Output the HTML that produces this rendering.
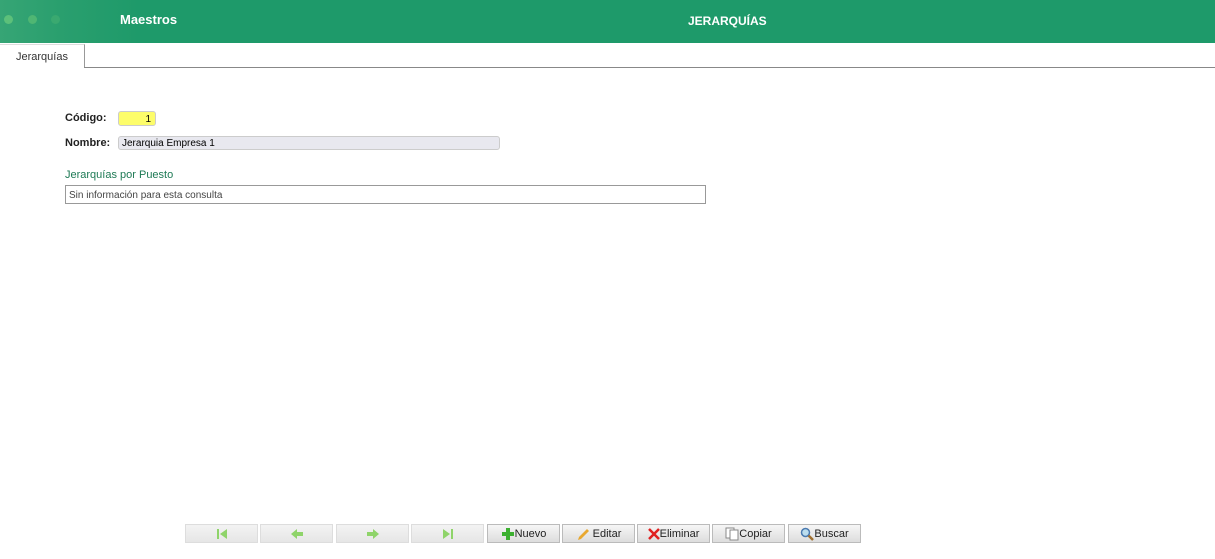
<!DOCTYPE html>
<html><head><meta charset="utf-8"><style>
body{margin:0;width:1215px;height:559px;background:#fff;font-family:"Liberation Sans",sans-serif;position:relative;overflow:hidden}
.hdr{position:absolute;left:0;top:0;width:1215px;height:43px;background:linear-gradient(90deg,#36a575 0px,#2a9f6e 60px,#1e9a6a 140px,#1e9a6a 100%)}
.dot{position:absolute;top:15px;width:9px;height:9px;border-radius:50%}
.t{position:absolute;color:#fff;font-weight:bold;font-size:13px}
.tab{position:absolute;left:0;top:44px;width:84px;height:23px;border-right:1px solid #999;border-top:1px solid #ddd;background:#fff;font-size:11px;color:#333;text-align:center;line-height:24px}
.line{position:absolute;left:84px;top:67px;width:1131px;height:1px;background:#888}
.lbl{position:absolute;font-size:11px;color:#222;font-weight:bold}
.in{position:absolute;box-sizing:border-box;font-size:10px;line-height:13px;border:1px solid #ccc;border-radius:3px}
.btn{position:absolute;top:524px;width:73px;height:19px;box-sizing:border-box;border:1px solid #bbb;background:linear-gradient(#f6f6f6,#ddd);font-size:11px;color:#222;display:flex;align-items:center;justify-content:center}
.btn.dis{border-color:#ddd;background:linear-gradient(#f3f3f3,#e6e6e6)}
</style></head><body>
<div class="hdr">
<div class="dot" style="left:4px;background:#5cc07a"></div>
<div class="dot" style="left:28px;background:#4fb673"></div>
<div class="dot" style="left:51px;background:#3aa970"></div>
<div class="t" style="left:120px;top:12px">Maestros</div>
<div class="t" style="left:688px;top:14px;font-size:12px">JERARQUÍAS</div>
</div>
<div class="tab">Jerarquías</div>
<div class="line"></div>
<div class="lbl" style="left:65px;top:112px">Código:</div>
<div class="in" style="left:118px;top:111px;width:38px;height:15px;background:#fdfd6a;text-align:right;padding-right:4px;padding-top:1px">1</div>
<div class="lbl" style="left:65px;top:137px">Nombre:</div>
<div class="in" style="left:118px;top:136px;width:382px;height:14px;background:#e8e8ef;padding-left:3px;padding-top:0px">Jerarquia Empresa 1</div>
<div class="lbl" style="left:65px;top:169px;color:#1e7a55;font-weight:normal">Jerarquías por Puesto</div>
<div class="in" style="left:65px;top:185px;width:641px;height:19px;border-radius:0;border-color:#999;padding:3px 3px;color:#444">Sin información para esta consulta</div>
<div class="btn dis" style="left:185px"><svg width="12" height="12"><rect x="1" y="1" width="2" height="10" fill="#8fd46a"/><path d="M11 1L4 6L11 11Z" fill="#8fd46a"/></svg></div>
<div class="btn dis" style="left:260px"><svg width="14" height="12"><path d="M1 6L7 1V4H13V8H7V11Z" fill="#8fd46a"/></svg></div>
<div class="btn dis" style="left:336px"><svg width="14" height="12"><path d="M13 6L7 1V4H1V8H7V11Z" fill="#8fd46a"/></svg></div>
<div class="btn dis" style="left:411px"><svg width="12" height="12"><rect x="9" y="1" width="2" height="10" fill="#8fd46a"/><path d="M1 1L8 6L1 11Z" fill="#8fd46a"/></svg></div>
<div class="btn" style="left:487px"><svg width="14" height="14"><path d="M5 1H9V5H13V9H9V13H5V9H1V5H5Z" fill="#3cb030"/></svg>Nuevo</div>
<div class="btn" style="left:562px"><svg width="14" height="14"><path d="M2 13L3 10L11 2L13 4L5 12Z" fill="#e8a830"/></svg>&nbsp;Editar</div>
<div class="btn" style="left:637px"><svg width="12" height="12"><path d="M1 1L11 11M11 1L1 11" stroke="#e02020" stroke-width="2.5"/></svg>Eliminar</div>
<div class="btn" style="left:712px"><svg width="14" height="14"><rect x="1" y="1" width="8" height="10" fill="#fff" stroke="#888"/><rect x="5" y="3" width="8" height="10" fill="#fff" stroke="#888"/></svg>Copiar</div>
<div class="btn" style="left:788px"><svg width="14" height="14"><circle cx="5.5" cy="5.5" r="4" fill="#bde" stroke="#4a7ab0" stroke-width="1.5"/><path d="M8.5 8.5L13 13" stroke="#a07030" stroke-width="2.5"/></svg>Buscar</div>
</body></html>
